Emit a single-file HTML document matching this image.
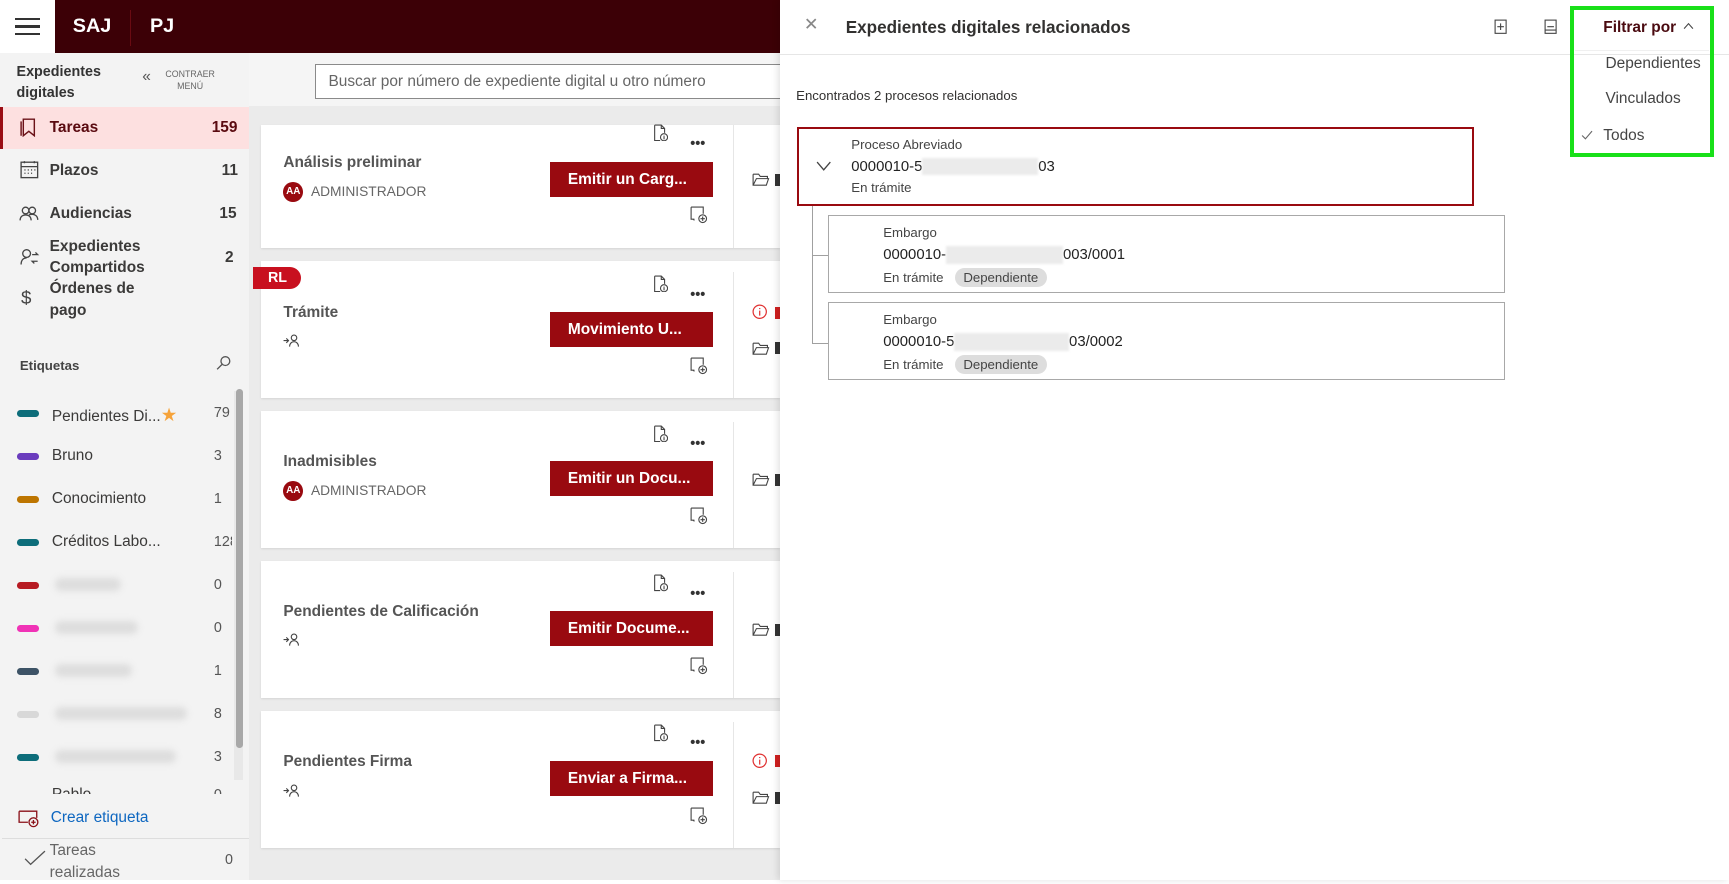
<!DOCTYPE html>
<html><head><meta charset="utf-8"><style>
*{box-sizing:border-box;margin:0;padding:0}
html{zoom:1.10268}
body{width:1568px;height:798px;position:relative;overflow:hidden;font-family:"Liberation Sans",sans-serif;color:#323130;background:#fff}
.a{position:absolute}
.side{left:0;top:48px;width:226px;height:750px;background:#f3f3f3}
.item{position:absolute;left:0;width:226px;font-size:14px;font-weight:bold;color:#3b3a39}
.tag{position:absolute;left:15px;width:20px;height:6px;border-radius:3px}
.tl{position:absolute;left:47px;font-size:14px;color:#3b3a39}
.tn{position:absolute;left:194px;font-size:13px;color:#555}
.blur{position:absolute;left:50px;height:12px;border-radius:6px;background:#ddd;filter:blur(3px)}
.card{position:absolute;left:237px;width:470px;background:#fff;box-shadow:0 1px 2px rgba(0,0,0,.1)}
.ct{position:absolute;left:20px;font-size:14px;font-weight:bold;color:#555}
.btn{position:absolute;left:262px;width:148px;height:32px;background:#990a10;color:#fff;font-size:14px;font-weight:bold;padding:8px 0 0 16px}
.vs{position:absolute;left:428px;width:1px;background:#e6e6e6}
.dots{position:absolute;left:389px;font-size:13px;font-weight:bold;letter-spacing:0px;color:#333}
.small{font-size:12px;color:#444}
.box{position:absolute;border:1px solid #a8a8a8;background:#fff}
.pill{display:inline-block;background:#ddd;border-radius:9px;padding:2px 8px;font-size:12px;color:#444;margin-left:10px}
.ic{position:absolute}
.E{position:absolute;left:703px;width:4px;height:11px;background:#333}
</style></head><body>
<svg width="0" height="0" style="position:absolute"><defs>
<symbol id="doc" viewBox="0 0 14 16"><g fill="none" stroke="#444" stroke-width="1"><path d="M1.5 1h6l3 3v4M1.5 1v14h5"/><path d="M7.5 1v3h3"/><circle cx="10" cy="12" r="3.2"/><path d="M10 11v3M10 10v.3"/></g></symbol>
<symbol id="note" viewBox="0 0 16 16"><g fill="none" stroke="#444" stroke-width="1"><path d="M1 1h11v6M1 1v11h2l1 1M1 12l3-0"/><circle cx="11.5" cy="11.5" r="3.5"/><path d="M11.5 9.5v4M9.5 11.5h4"/></g></symbol>
<symbol id="fold" viewBox="0 0 16 14"><g fill="none" stroke="#444" stroke-width="1"><path d="M1 2h5l1.5 2H14v2M1 2v10h12l2-6H4L1 12"/></g></symbol>
<symbol id="info" viewBox="0 0 14 14"><g fill="none" stroke="#e03030" stroke-width="1.1"><circle cx="7" cy="7" r="6"/><path d="M7 6v4.5M7 3.6v1"/></g></symbol>
<symbol id="per" viewBox="0 0 16 12"><g fill="none" stroke="#444" stroke-width="1"><path d="M0.5 6h4M3 4l2 2-2 2"/><circle cx="10" cy="3.5" r="2.5"/><path d="M6 11.5c0-3 2-4.5 4-4.5s4 1.5 4 4.5"/></g></symbol>
</defs></svg>
<!-- header -->
<div class="a" style="left:0;top:0;width:50px;height:48px;background:#fff"></div>
<div class="a" style="left:14px;top:16px;width:22px;height:2px;background:#333"></div>
<div class="a" style="left:14px;top:23px;width:22px;height:2px;background:#333"></div>
<div class="a" style="left:14px;top:30px;width:22px;height:2px;background:#333"></div>
<div class="a" style="left:50px;top:0;width:657px;height:48px;background:#3c0006"></div>
<div class="a" style="left:66px;top:14px;color:#fff;font-size:18px;font-weight:bold">SAJ</div>
<div class="a" style="left:118px;top:9px;width:1px;height:33px;background:#6a0b12"></div>
<div class="a" style="left:136px;top:14px;color:#fff;font-size:18px;font-weight:bold">PJ</div>
<!-- sidebar -->
<div class="a side"></div>
<div class="a" style="left:15px;top:56px;font-size:13px;font-weight:bold;line-height:19px;color:#333">Expedientes<br>digitales</div>
<div class="a" style="left:129px;top:62px;font-size:14px;color:#555">«</div>
<div class="a" style="left:150px;top:62px;font-size:8px;color:#666;text-align:center;line-height:11px">CONTRAER<br>MENÚ</div>
<div class="a" style="left:0;top:97px;width:226px;height:38px;background:#fde0e0;border-left:3px solid #9a0d14"></div>
<svg class="a" style="left:18px;top:106px" width="16" height="18" viewBox="0 0 16 18" fill="none" stroke="#6b1218" stroke-width="1.3"><path d="M3 2h10v15l-5-4-5 4z"/><path d="M1 4v13"/></svg>
<div class="item" style="top:108px;color:#5a0a10"><span style="position:absolute;left:45px">Tareas</span><span style="position:absolute;left:192px">159</span></div>
<svg class="a" style="left:18px;top:145px" width="17" height="17" viewBox="0 0 17 17" fill="none" stroke="#444" stroke-width="1.2"><rect x="1" y="2" width="15" height="14"/><path d="M1 6h15M4 1v2M13 1v2M4 9h1M7 9h1M10 9h1M13 9h1M4 12h1M7 12h1M10 12h1"/></svg>
<div class="item" style="top:147px"><span style="position:absolute;left:45px">Plazos</span><span style="position:absolute;left:201px">11</span></div>
<svg class="a" style="left:17px;top:186px" width="18" height="15" viewBox="0 0 18 15" fill="none" stroke="#444" stroke-width="1.2"><circle cx="6" cy="5" r="3"/><circle cx="12" cy="5" r="3"/><path d="M1 14c0-4 3-5 5-5s5 1 5 5M9 9c1-.5 2-.5 3-.5 2 0 5 1 5 5"/></svg>
<div class="item" style="top:186px"><span style="position:absolute;left:45px">Audiencias</span><span style="position:absolute;left:199px">15</span></div>
<svg class="a" style="left:18px;top:225px" width="18" height="16" viewBox="0 0 18 16" fill="none" stroke="#444" stroke-width="1.2"><circle cx="6" cy="5" r="3.5"/><path d="M1 15c0-4 2-6 5-6M11 6h5l-2-2M16 12h-5l2 2"/></svg>
<div class="item" style="top:215px;line-height:19px"><span style="position:absolute;left:45px">Expedientes<br>Compartidos</span><span style="position:absolute;left:204px;top:10px">2</span></div>
<div class="a" style="left:19px;top:260px;font-size:17px;color:#444">$</div>
<div class="item" style="top:252px;line-height:20px"><span style="position:absolute;left:45px">Órdenes de<br>pago</span></div>
<div class="a" style="left:18px;top:325px;font-size:12px;font-weight:bold;color:#444">Etiquetas</div>
<svg class="a" style="left:196px;top:322px" width="14" height="14" viewBox="0 0 14 14" fill="none" stroke="#555" stroke-width="1.2"><circle cx="8.5" cy="5.5" r="4"/><path d="M5.5 8.5L1 13"/></svg>
<div class="a" style="left:212px;top:355px;width:8px;height:352px;background:#e8e8e8"></div>
<div class="a" style="left:214px;top:353px;width:6px;height:325px;background:#a8a8a8;border-radius:3px"></div>
<div class="a" style="left:0;top:355px;width:210px;height:365px;overflow:hidden">
<div class="tag" style="top:17px;background:#0d6d7a"></div><div class="tl" style="top:11px">Pendientes Di...<span style="color:#f6a33a;font-size:17px">★</span></div><div class="tn" style="top:12px">79</div>
<div class="tag" style="top:56px;background:#6a3cbd"></div><div class="tl" style="top:50px">Bruno</div><div class="tn" style="top:51px">3</div>
<div class="tag" style="top:95px;background:#bd7500"></div><div class="tl" style="top:89px">Conocimiento</div><div class="tn" style="top:90px">1</div>
<div class="tag" style="top:134px;background:#0d6d7a"></div><div class="tl" style="top:128px">Créditos Labo...</div><div class="tn" style="top:129px">128</div>
<div class="tag" style="top:173px;background:#b71b23"></div><div class="blur" style="top:169px;width:60px"></div><div class="tn" style="top:168px">0</div>
<div class="tag" style="top:212px;background:#f033b6"></div><div class="blur" style="top:208px;width:75px"></div><div class="tn" style="top:207px">0</div>
<div class="tag" style="top:251px;background:#3d5366"></div><div class="blur" style="top:247px;width:70px"></div><div class="tn" style="top:246px">1</div>
<div class="tag" style="top:290px;background:#d8d8d8"></div><div class="blur" style="top:286px;width:120px"></div><div class="tn" style="top:285px">8</div>
<div class="tag" style="top:329px;background:#0d6d7a"></div><div class="blur" style="top:325px;width:110px"></div><div class="tn" style="top:324px">3</div>
<div class="tag" style="top:366px;background:#0d6d7a"></div><div class="tl" style="top:358px">Pablo</div><div class="tn" style="top:359px">0</div>
</div>
<svg class="a" style="left:16px;top:734px" width="20" height="17" viewBox="0 0 20 17" fill="none" stroke="#8a1018" stroke-width="1.2"><path d="M1 2h16v6M1 2v10h8"/><circle cx="14" cy="12" r="4"/><path d="M14 10v4M12 12h4"/></svg>
<div class="a" style="left:46px;top:734px;font-size:14px;color:#0e67c0">Crear etiqueta</div>
<div class="a" style="left:2px;top:760px;width:224px;height:1px;background:#ddd"></div>
<svg class="a" style="left:22px;top:771px" width="20" height="14" viewBox="0 0 20 14" fill="none" stroke="#555" stroke-width="1.2"><path d="M1 8l5 5L19 1"/></svg>
<div class="a" style="left:45px;top:762px;font-size:14px;line-height:20px;color:#666">Tareas<br>realizadas</div>
<div class="a" style="left:204px;top:773px;font-size:13px;color:#555">0</div>
<!-- main -->
<div class="a" style="left:226px;top:48px;width:481px;height:750px;background:#ebebeb"></div>
<div class="a" style="left:226px;top:48px;width:481px;height:48px;background:#f5f5f5"></div>
<div class="a" style="left:286px;top:58px;width:430px;height:32px;background:#fff;border:1px solid #8a8a8a;padding:7px 11px;font-size:14px;color:#666;white-space:nowrap">Buscar por número de expediente digital u otro número</div>

<div class="card" style="top:113px;height:112px">
<div class="ct" style="top:27px">Análisis preliminar</div>
<div class="a" style="left:20px;top:52px;width:18px;height:18px;border-radius:50%;background:#990a10;color:#fff;font-size:9px;font-weight:bold;text-align:center;line-height:18px">AA</div>
<div class="a" style="left:45px;top:54px;font-size:12.5px;color:#666">ADMINISTRADOR</div>
<div class="btn" style="top:34px">Emitir un Carg...</div>
<div class="dots" style="top:10px">•••</div>
<div class="vs" style="top:0;height:112px"></div>
</div>
<div class="card" style="top:237px;height:124px">
<div class="ct" style="top:39px">Trámite</div>
<svg class="ic" style="left:20px;top:66px" width="16" height="12"><use href="#per"/></svg>
<div class="btn" style="top:46px">Movimiento U...</div>
<div class="dots" style="top:23px">•••</div>
<div class="vs" style="top:10px;height:114px"></div>
</div>
<div class="a" style="left:229px;top:242px;width:44px;height:20px;background:#c8101f;border-radius:0 10px 10px 0;color:#fff;font-size:13px;font-weight:bold;padding:3px 0 0 14px">RL</div>
<div class="card" style="top:373px;height:124px">
<div class="ct" style="top:38px">Inadmisibles</div>
<div class="a" style="left:20px;top:63px;width:18px;height:18px;border-radius:50%;background:#990a10;color:#fff;font-size:9px;font-weight:bold;text-align:center;line-height:18px">AA</div>
<div class="a" style="left:45px;top:65px;font-size:12.5px;color:#666">ADMINISTRADOR</div>
<div class="btn" style="top:45px">Emitir un Docu...</div>
<div class="dots" style="top:22px">•••</div>
<div class="vs" style="top:10px;height:114px"></div>
</div>
<div class="card" style="top:509px;height:124px">
<div class="ct" style="top:38px">Pendientes de Calificación</div>
<svg class="ic" style="left:20px;top:65px" width="16" height="12"><use href="#per"/></svg>
<div class="btn" style="top:45px">Emitir Docume...</div>
<div class="dots" style="top:22px">•••</div>
<div class="vs" style="top:10px;height:114px"></div>
</div>
<div class="card" style="top:645px;height:124px">
<div class="ct" style="top:38px">Pendientes Firma</div>
<svg class="ic" style="left:20px;top:66px" width="16" height="12"><use href="#per"/></svg>
<div class="btn" style="top:45px">Enviar a Firma...</div>
<div class="dots" style="top:22px">•••</div>
<div class="vs" style="top:10px;height:114px"></div>
</div>
<!-- card icons -->
<svg class="ic" style="left:592px;top:112px" width="14" height="16"><use href="#doc"/></svg>
<svg class="ic" style="left:592px;top:249px" width="14" height="16"><use href="#doc"/></svg>
<svg class="ic" style="left:592px;top:385px" width="14" height="16"><use href="#doc"/></svg>
<svg class="ic" style="left:592px;top:521px" width="14" height="16"><use href="#doc"/></svg>
<svg class="ic" style="left:592px;top:657px" width="14" height="16"><use href="#doc"/></svg>
<svg class="ic" style="left:626px;top:187px" width="16" height="16"><use href="#note"/></svg>
<svg class="ic" style="left:626px;top:324px" width="16" height="16"><use href="#note"/></svg>
<svg class="ic" style="left:626px;top:460px" width="16" height="16"><use href="#note"/></svg>
<svg class="ic" style="left:626px;top:596px" width="16" height="16"><use href="#note"/></svg>
<svg class="ic" style="left:626px;top:732px" width="16" height="16"><use href="#note"/></svg>
<svg class="ic" style="left:682px;top:156px" width="16" height="14"><use href="#fold"/></svg><div class="E" style="top:158px"></div>
<svg class="ic" style="left:682px;top:276px" width="14" height="14"><use href="#info"/></svg><div class="E" style="top:278px;background:#d02020"></div>
<svg class="ic" style="left:682px;top:309px" width="16" height="14"><use href="#fold"/></svg><div class="E" style="top:310px"></div>
<svg class="ic" style="left:682px;top:428px" width="16" height="14"><use href="#fold"/></svg><div class="E" style="top:430px"></div>
<svg class="ic" style="left:682px;top:564px" width="16" height="14"><use href="#fold"/></svg><div class="E" style="top:566px"></div>
<svg class="ic" style="left:682px;top:683px" width="14" height="14"><use href="#info"/></svg><div class="E" style="top:685px;background:#d02020"></div>
<svg class="ic" style="left:682px;top:716px" width="16" height="14"><use href="#fold"/></svg><div class="E" style="top:718px"></div>
<!-- right panel -->
<div class="a" style="left:707px;top:0;width:861px;height:798px;background:#fff;box-shadow:-2px 0 6px rgba(0,0,0,.12)"></div>
<div class="a" style="left:707px;top:49px;width:861px;height:1px;background:#e6e6e6"></div>
<div class="a" style="left:729px;top:13px;font-size:16px;color:#888">✕</div>
<div class="a" style="left:767px;top:16px;font-size:15.5px;font-weight:bold;color:#323130">Expedientes digitales relacionados</div>
<svg class="a" style="left:1355px;top:17px" width="12" height="14" viewBox="0 0 12 14" fill="none" stroke="#444"><rect x="1" y="1" width="10" height="12"/><path d="M6 4v6M3 7h6"/></svg>
<svg class="a" style="left:1400px;top:17px" width="12" height="14" viewBox="0 0 12 14" fill="none" stroke="#444"><rect x="1" y="1" width="10" height="12"/><path d="M3 7h6M1 10h10"/></svg>
<div class="a" style="left:1424px;top:5px;width:130px;height:137px;border:4px solid #19e019"></div>
<div class="a" style="left:1454px;top:17px;font-size:14px;font-weight:bold;color:#4a0a10">Filtrar por</div>
<svg class="a" style="left:1526px;top:20px" width="10" height="7" viewBox="0 0 10 7" fill="none" stroke="#444"><path d="M1 6l4-4.5L9 6"/></svg>
<div class="a" style="left:1428px;top:45px;width:122px;height:1px;background:#f0f0f0"></div>
<div class="a" style="left:1456px;top:50px;font-size:14px;color:#444">Dependientes</div>
<div class="a" style="left:1456px;top:82px;font-size:14px;color:#444">Vinculados</div>
<svg class="a" style="left:1434px;top:118px" width="11" height="9" viewBox="0 0 11 9" fill="none" stroke="#666"><path d="M1 5l3 3 6-7"/></svg>
<div class="a" style="left:1454px;top:115px;font-size:14px;color:#444">Todos</div>
<div class="a" style="left:722px;top:80px;font-size:12px;color:#323130">Encontrados 2 procesos relacionados</div>
<div class="a" style="left:723px;top:115px;width:614px;height:72px;border:2px solid #990a10"></div>
<svg class="a" style="left:740px;top:146px" width="14" height="9" viewBox="0 0 14 9" fill="none" stroke="#444" stroke-width="1.2"><path d="M1 1l6 7 6-7"/></svg>
<div class="a" style="left:772px;top:124px;font-size:12px;color:#444">Proceso Abreviado</div>
<div class="a" style="left:772px;top:143px;font-size:13.5px;color:#222">0000010-5<span style="display:inline-block;width:105px;height:16px;background:#ebebeb;vertical-align:middle;filter:blur(1px)"></span>03</div>
<div class="a" style="left:772px;top:163px;font-size:12px;color:#444">En trámite</div>
<div class="a" style="left:736px;top:187px;width:1px;height:125px;background:#a0a0a0"></div>
<div class="a" style="left:736px;top:231px;width:15px;height:1px;background:#a0a0a0"></div>
<div class="a" style="left:736px;top:311px;width:15px;height:1px;background:#a0a0a0"></div>
<div class="box" style="left:751px;top:195px;width:614px;height:71px"></div>
<div class="a" style="left:801px;top:204px;font-size:12px;color:#444">Embargo</div>
<div class="a" style="left:801px;top:223px;font-size:13.5px;color:#222">0000010-<span style="display:inline-block;width:106px;height:16px;background:#ebebeb;vertical-align:middle;filter:blur(1px)"></span>003/0001</div>
<div class="a" style="left:801px;top:243px;font-size:12px;color:#444">En trámite<span class="pill">Dependiente</span></div>
<div class="box" style="left:751px;top:274px;width:614px;height:71px"></div>
<div class="a" style="left:801px;top:283px;font-size:12px;color:#444">Embargo</div>
<div class="a" style="left:801px;top:302px;font-size:13.5px;color:#222">0000010-5<span style="display:inline-block;width:104px;height:16px;background:#ebebeb;vertical-align:middle;filter:blur(1px)"></span>03/0002</div>
<div class="a" style="left:801px;top:322px;font-size:12px;color:#444">En trámite<span class="pill">Dependiente</span></div>
</body></html>
